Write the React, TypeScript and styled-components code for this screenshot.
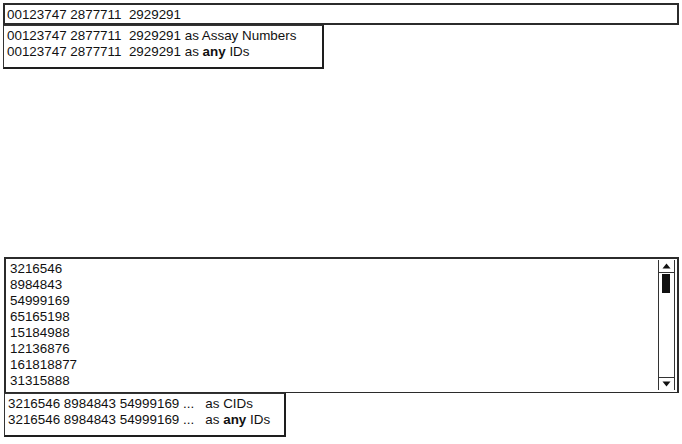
import React from 'react';
import styled, { createGlobalStyle } from 'styled-components';

const GlobalStyle = createGlobalStyle`
  html, body {
    margin: 0;
    padding: 0;
    background: #ffffff;
  }
  body {
    font-family: 'Liberation Sans', Arial, sans-serif;
    font-size: 13.4px;
    color: #111;
  }
`;

const Page = styled.div`
  width: 682px;
  height: 444px;
  padding: 3px 3px 0 3px;
  box-sizing: border-box;
  display: flex;
  flex-direction: column;
`;

const Section = styled.div<{ $top?: number }>`
  display: flex;
  flex-direction: column;
  margin-top: ${({ $top }) => $top ?? 0}px;
`;

const TextInput = styled.div`
  height: 22px;
  box-sizing: border-box;
  border: 2px solid #2b2b2b;
  padding: 0 2px;
  display: flex;
  align-items: center;
  white-space: pre;
`;

const Dropdown = styled.div<{ $width: number; $shift?: number }>`
  width: ${({ $width }) => $width}px;
  margin-left: ${({ $shift }) => $shift ?? 0}px;
  height: 44px;
  box-sizing: border-box;
  border: 1px solid #333;
  border-right: 2px solid #1e1e1e;
  border-bottom: 2px solid #1e1e1e;
  padding: 2px 3px 0 3px;
  display: flex;
  flex-direction: column;
  background: #fff;
`;

const Option = styled.div`
  height: 16px;
  line-height: 16px;
  white-space: pre;
`;

const TextArea = styled.div`
  margin-left: 1px;
  height: 136px;
  width: 675px;
  box-sizing: border-box;
  border: 2px solid #2b2b2b;
  border-bottom: 1px solid #2b2b2b;
  display: flex;
`;

const Lines = styled.div`
  flex: 1;
  padding: 2px 4px 0 4px;
`;

const Line = styled.div`
  height: 16px;
  line-height: 16px;
`;

const ScrollBar = styled.div`
  width: 15px;
  margin: 1px 2px 2px 0;
  border-left: 1px solid #333;
  border-right: 1px solid #333;
  display: flex;
  flex-direction: column;
`;

const Arrow = styled.div`
  height: 12px;
  border-bottom: 1px solid #333;
  display: flex;
  align-items: center;
  justify-content: center;
  &:last-child {
    border-bottom: none;
    border-top: 1px solid #333;
  }
`;

const Track = styled.div`
  flex: 1;
  padding: 1px 3px;
`;

const Thumb = styled.div`
  width: 8px;
  height: 19px;
  background: #111;
`;

const ids = ['3216546', '8984843', '54999169', '65165198', '15184988', '12136876', '161818877', '31315888'];

export default function App() {
  return (
    <>
      <GlobalStyle />
      <Page>
        <Section>
          <TextInput>00123747 2877711  2929291</TextInput>
          <Dropdown $width={321}>
            <Option>00123747 2877711  2929291 as Assay Numbers</Option>
            <Option>
              00123747 2877711  2929291 as <b>any</b> IDs
            </Option>
          </Dropdown>
        </Section>
        <Section $top={188}>
          <TextArea>
            <Lines>
              {ids.map((id) => (
                <Line key={id}>{id}</Line>
              ))}
            </Lines>
            <ScrollBar>
              <Arrow>
                <svg width="9" height="6" viewBox="0 0 9 6">
                  <path d="M0.5 5.5 L4.5 0.5 L8.5 5.5 Z" fill="#111" />
                </svg>
              </Arrow>
              <Track>
                <Thumb />
              </Track>
              <Arrow>
                <svg width="9" height="6" viewBox="0 0 9 6">
                  <path d="M0.5 0.5 L4.5 5.5 L8.5 0.5 Z" fill="#111" />
                </svg>
              </Arrow>
            </ScrollBar>
          </TextArea>
          <Dropdown $width={282} $shift={1}>
            <Option>3216546 8984843 54999169 ...   as CIDs</Option>
            <Option>
              3216546 8984843 54999169 ...   as <b>any</b> IDs
            </Option>
          </Dropdown>
        </Section>
      </Page>
    </>
  );
}
